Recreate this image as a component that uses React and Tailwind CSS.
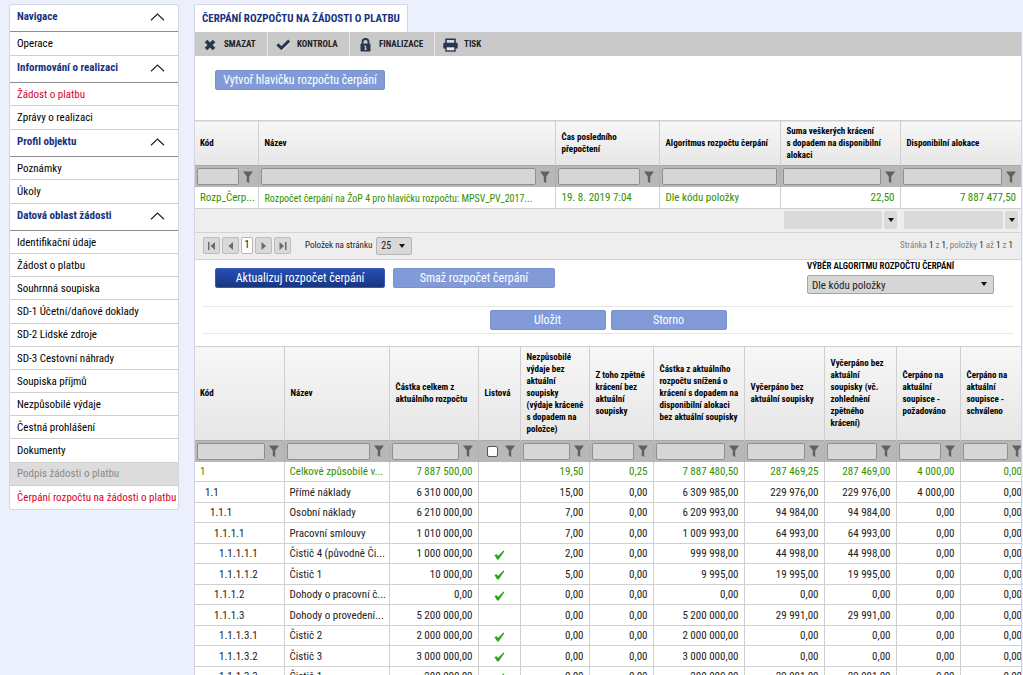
const groups = [
  { title: "Navigace", items: ["Operace"] },
  { title: "Informování o realizaci", items: ["Žádost o platbu", "Zprávy o realizaci"] },
  { title: "Profil objektu", items: ["Poznámky", "Úkoly"] },
  {
    title: "Datová oblast žádosti",
    tall: true,
    items: [
      "Identifikační údaje",
      "Žádost o platbu",
      "Souhrnná soupiska",
      "SD-1 Účetní/daňové doklady",
      "SD-2 Lidské zdroje",
      "SD-3 Cestovní náhrady",
      "Soupiska příjmů",
      "Nezpůsobilé výdaje",
      "Čestná prohlášení",
      "Dokumenty",
      "Podpis žádosti o platbu",
      "Čerpání rozpočtu na žádosti o platbu",
    ],
  },
];

function itemTone(group, item) {
  if (item === "Podpis žádosti o platbu") return "bg-[#dcdcdc] text-[#8a8a8a]";
  if (item.startsWith("Čerpání") || (group === "Informování o realizaci" && item === "Žádost o platbu"))
    return "text-[#d8002a]";
  return "text-black";
}

function Sidebar() {
  return (
    <nav className="w-[170px] shrink-0 overflow-hidden rounded-[3px] border border-[#d3d6e2] bg-white text-[11px]">
      {groups.map((g, gi) => (
        <section key={g.title}>
          <h2 className={gi === 0 ? "border-b border-[#8f8f8f]" : "border-y border-t-[#d0d0d0] border-b-[#8f8f8f]"}>
            <button type="button" className="flex h-[26px] w-full items-center justify-between pr-[13px] pb-[2px] pl-[7px] font-bold text-[#17327e]">
              <span className="whitespace-nowrap">{g.title}</span>
              <svg width="15" height="8" viewBox="0 0 15 8" fill="none" stroke="#222" strokeWidth="1.2" aria-hidden="true">
                <path d="M1 7.2 7.5 1 14 7.2" />
              </svg>
            </button>
          </h2>
          <ul
            className={
              "divide-y divide-[#d0d0d0] " + (g.tall ? "grid h-[278px] auto-rows-fr" : "")
            }
          >
            {g.items.map((it) => (
              <li key={it} className={g.tall ? "" : "h-[23px]"}>
                <a href="#" className={"flex h-full items-center pt-[2px] pl-[7px] whitespace-nowrap " + itemTone(g.title, it)}>
                  {it}
                </a>
              </li>
            ))}
          </ul>
        </section>
      ))}
    </nav>
  );
}

const CrossIcon = () => (
  <svg width="12" height="12" viewBox="0 0 12 12" aria-hidden="true">
    <path d="M2 2l8 8M10 2l-8 8" fill="none" stroke="#28374f" strokeWidth="3.6" />
  </svg>
);

const TickIcon = () => (
  <svg width="15" height="12" viewBox="0 0 15 12" aria-hidden="true">
    <path d="M2.400 6.400 6 10.400 13.800 2.600" fill="none" stroke="#e8ebf0" strokeWidth="2.600" />
    <path d="M1.400 5.400 5.400 9.200 13.200 1.600" fill="none" stroke="#28374f" strokeWidth="3" />
  </svg>
);

const LockIcon = () => (
  <svg width="11" height="14" viewBox="0 0 11 14" aria-hidden="true">
    <path d="M2.5 6V4a3 3 0 0 1 6 0v2" fill="none" stroke="#28374f" strokeWidth="1.8" />
    <rect x="0.5" y="5.5" width="10" height="8" rx="1" fill="#28374f" />
    <path d="M4.2 7.800h1.900v3h.9v1H4.200v-1h.8V8.800h-.8z" fill="#c9c9c9" />
  </svg>
);

const PrintIcon = () => (
  <svg width="15" height="14" viewBox="0 0 15 14" aria-hidden="true">
    <path d="M3 5V1.200h9V5" fill="#d5dae2" stroke="#28374f" strokeWidth="1.6" />
    <path d="M1.500 4.800h12A1.200 1.200 0 0 1 14.700 6V10.500H.3V6A1.200 1.200 0 0 1 1.500 4.800z" fill="#28374f" />
    <rect x="3" y="8.600" width="9" height="4.400" fill="#e6e9ee" stroke="#28374f" strokeWidth="1.4" />
  </svg>
);

const tools = [
  { label: "SMAZAT", icon: <CrossIcon />, w: "w-[73px]" },
  { label: "KONTROLA", icon: <TickIcon />, w: "w-[82px]" },
  { label: "FINALIZACE", icon: <LockIcon />, w: "w-[85px]" },
  { label: "TISK", icon: <PrintIcon />, w: "w-[60px]" },
];

function Toolbar() {
  return (
    <div className="flex h-6 bg-[#c9c9c9]">
      {tools.map((t, i) => (
        <button
          key={t.label}
          type="button"
          className={
            "flex h-full items-center gap-[6px] pt-px pl-[7px] text-[9px] font-bold text-[#222] " +
            t.w +
            (i < 3 ? " border-r border-[#e6e6e6]" : "")
          }
        >
          <span className="flex w-4 justify-center">{t.icon}</span>
          {t.label}
        </button>
      ))}
    </div>
  );
}

const Funnel = () => (
  <svg width="10" height="12" viewBox="0 0 10 12" aria-hidden="true">
    <path d="M0 .5h10L6.200 5.500V12L3.800 10.800V5.500z" fill="#606060" />
  </svg>
);

function FilterCell({ label, funnel = true, check = false }) {
  return (
    <td className="border-r border-[#b0b0b0] p-0 last:border-r-0">
      <div className={"flex h-[21px] items-center pl-[2px] " + (funnel ? "gap-[4px] pr-[5px]" : "pr-[3px]")}>
        {check ? (
          <span className="flex flex-1 justify-center pl-1">
            <input
              type="checkbox"
              aria-label={label}
              className="size-[11px] appearance-none rounded-[2px] border border-[#555] bg-white"
            />
          </span>
        ) : (
          <input
            type="text"
            aria-label={label}
            className="h-[17px] w-0 min-w-0 flex-1 rounded-[2px] border border-[#8e8e8e] bg-[#d6d6d6]"
          />
        )}
        {funnel && (
          <button type="button" aria-label={"Filtr " + label} className="shrink-0">
            <Funnel />
          </button>
        )}
      </div>
    </td>
  );
}

const headCell =
  "border-r border-[#cfcfcf] pr-[3px] pl-[6px] text-left align-middle text-[9px] leading-[12px] font-bold text-black first:pl-[5px] last:border-r-0";
const headRow = "bg-linear-to-b from-[#f7f7f7] to-[#e6e6e6]";
const filterRow = "border-t border-[#a9a9a9] bg-[#b8b8b8]";

const Caret = () => (
  <svg width="6" height="4" viewBox="0 0 6 4" aria-hidden="true">
    <path d="M0 0h6L3 4z" fill="#111" />
  </svg>
);

function HeaderGrid() {
  const cols = [
    { t: "Kód", w: "w-[63px]" },
    { t: "Název", w: "" },
    { t: "Čas posledního přepočtení", w: "w-[104px]" },
    { t: "Algoritmus rozpočtu čerpání", w: "w-[121px]", nofilter: true },
    { t: "Suma veškerých krácení s\u00a0dopadem na disponibilní alokaci", w: "w-[120px]" },
    { t: "Disponibilní alokace", w: "w-[121px]" },
  ];
  const cell = "overflow-hidden whitespace-nowrap border-r border-[#cfcfcf] pt-[2px] pl-[6px] first:pl-[5px] last:border-r-0";
  return (
    <table className="w-full table-fixed border-collapse">
      <colgroup>
        {cols.map((c) => (
          <col key={c.t} className={c.w} />
        ))}
      </colgroup>
      <thead>
        <tr className={"h-[45px] border-t border-[#cfcfcf] " + headRow}>
          {cols.map((c) => (
            <th key={c.t} scope="col" className={headCell}>
              {c.t}
            </th>
          ))}
        </tr>
        <tr className={filterRow}>
          {cols.map((c) => (
            <FilterCell key={c.t} label={c.t} funnel={!c.nofilter} />
          ))}
        </tr>
      </thead>
      <tbody>
        <tr className="h-[21px] border-b border-[#cfcfcf] bg-white text-[11px] text-[#2f8f00]">
          <td className={cell}>Rozp_Čerp...</td>
          <td className={cell + " text-[10px]"}>Rozpočet čerpání na ŽoP 4 pro hlavičku rozpočtu: MPSV_PV_2017...</td>
          <td className={cell}>19. 8. 2019 7:04</td>
          <td className={cell}>Dle kódu položky</td>
          <td className={cell + " pr-[5px] text-right"}>22,50</td>
          <td className={cell + " pr-[5px] text-right"}>7 887 477,50</td>
        </tr>
      </tbody>
      <tfoot>
        <tr className="h-6 border-b border-[#d4d4d4] bg-[#eeeeee]">
          <td colSpan={4} />
          {["Suma krácení", "Suma alokace"].map((l) => (
            <td key={l} className="p-0">
              <div className="flex gap-[2px] pr-[3px] pl-[4px]">
                <span className="h-[18px] flex-1 rounded-[2px] bg-[#dadada]" />
                <button type="button" aria-label={l} className="flex h-[18px] w-[13px] items-center justify-center rounded-[2px] bg-[#dadada]">
                  <Caret />
                </button>
              </div>
            </td>
          ))}
        </tr>
      </tfoot>
    </table>
  );
}

const pageArrows = {
  first: "M0 0h1.500v8H0zM7 0v8L2.500 4z",
  prev: "M6 0v8L1.500 4z",
  next: "M1.500 0v8L6 4z",
  last: "M0.500 0v8L5 4zM6 0h1.500v8H6z",
};

function PageButton({ kind, label }) {
  return (
    <button
      type="button"
      aria-label={label}
      className="flex h-[17px] w-[17px] items-center justify-center rounded-[2px] border border-[#bcbcbc] bg-[#d9d9d9]"
    >
      <svg width="8" height="8" viewBox="0 0 8 8" aria-hidden="true">
        <path d={pageArrows[kind]} fill="#6a6a6a" />
      </svg>
    </button>
  );
}

function Pager() {
  return (
    <div className="flex h-[27px] items-center justify-between border-b border-[#d4d4d4] bg-[#eeeeee] px-[8px] text-[9px] text-[#222]">
      <div className="flex items-center gap-[2px]">
        <PageButton kind="first" label="První stránka" />
        <PageButton kind="prev" label="Předchozí stránka" />
        <span className="flex h-[17px] w-3 items-center justify-center rounded-[2px] border border-[#b5b5b5] bg-white text-[11px]">1</span>
        <PageButton kind="next" label="Další stránka" />
        <PageButton kind="last" label="Poslední stránka" />
        <label htmlFor="page-size" className="ml-[12px] whitespace-nowrap">
          Položek na stránku
        </label>
        <div className="relative ml-[2px]">
          <select
            id="page-size"
            defaultValue="25"
            className="block h-[18px] w-[36px] appearance-none rounded-[2px] border border-[#b5b5b5] bg-[#d9d9d9] pl-[4px] text-[10px]"
          >
            <option>25</option>
            <option>50</option>
          </select>
          <span className="pointer-events-none absolute inset-y-0 right-[7px] flex items-center">
            <Caret />
          </span>
        </div>
      </div>
      <p className="text-[#808080]">
        Stránka <span className="text-[#222]">1</span> z <span className="text-[#222]">1</span>, položky{" "}
        <span className="text-[#222]">1</span> až <span className="text-[#222]">1</span> z{" "}
        <span className="text-[#222]">1</span>
      </p>
    </div>
  );
}

function Btn({ children, className, dark = false }) {
  return (
    <button
      type="button"
      className={
        "h-5 rounded-[2px] border pt-px text-[12px] leading-[17px] whitespace-nowrap text-white " +
        (dark ? "border-[#3a5bb0] bg-linear-to-b from-[#2650b8] to-[#17367f] " : "border-[#7890cc] bg-[#829bd8] ") +
        className
      }
    >
      {children}
    </button>
  );
}

function Actions() {
  return (
    <div className="h-[86px] px-[7px]">
      <div className="flex h-[46px] items-start justify-between pr-[20px] pl-[13px]">
        <div className="flex gap-2 pt-[8px]">
          <Btn dark className="w-[170px]">Aktualizuj rozpočet čerpání</Btn>
          <Btn className="w-[162px]">Smaž rozpočet čerpání</Btn>
        </div>
        <div className="w-[187px]">
          <label htmlFor="algo" className="block pb-[3px] text-[9px] leading-[12px] font-semibold whitespace-nowrap text-black">
            VÝBĚR ALGORITMU ROZPOČTU ČERPÁNÍ
          </label>
          <div className="relative">
            <select
              id="algo"
              defaultValue="Dle kódu položky"
              className="block h-[19px] w-full appearance-none rounded-[2px] border border-[#a5a5a5] bg-[#d6d6d6] pt-[2px] pl-[4px] text-[11px] text-[#222]"
            >
              <option>Dle kódu položky</option>
            </select>
            <span className="pointer-events-none absolute inset-y-0 right-[7px] flex items-center">
              <Caret />
            </span>
          </div>
        </div>
      </div>
      <div className="flex h-7 items-center justify-center gap-[5px] border-y border-[#e8e8e8]">
        <Btn className="w-[116px]">Uložit</Btn>
        <Btn className="w-[116px]">Storno</Btn>
      </div>
    </div>
  );
}

const budgetCols = [
  { t: "Kód", w: "w-[89px]" },
  { t: "Název", w: "" },
  { t: "Částka celkem z aktuálního rozpočtu", w: "w-[89px]" },
  { t: "Listová", w: "w-[42px]", check: true },
  { t: "Nezpůsobilé výdaje bez aktuální soupisky (výdaje krácené s\u00a0dopadem na položce)", w: "w-[69px]" },
  { t: "Z toho zpětné krácení bez aktuální soupisky", w: "w-[64px]" },
  { t: "Částka z aktuálního rozpočtu snížená o krácení s dopadem na disponibilní alokaci bez aktuální soupisky", w: "w-[91px]" },
  { t: "Vyčerpáno bez aktuální soupisky", w: "w-[80px]" },
  { t: "Vyčerpáno bez aktuální soupisky (vč. zohlednění zpětného krácení)", w: "w-[72px]" },
  { t: "Čerpáno na aktuální soupisce - požadováno", w: "w-[64px]" },
  { t: "Čerpáno na aktuální soupisce - schváleno", w: "w-[67px]" },
];

const rows = [
  ["1", "Celkové způsobilé v...", "7 887 500,00", false, "19,50", "0,25", "7 887 480,50", "287 469,25", "287 469,00", "4 000,00", "0,00"],
  ["1.1", "Přímé náklady", "6 310 000,00", false, "15,00", "0,00", "6 309 985,00", "229 976,00", "229 976,00", "4 000,00", "0,00"],
  ["1.1.1", "Osobní náklady", "6 210 000,00", false, "7,00", "0,00", "6 209 993,00", "94 984,00", "94 984,00", "0,00", "0,00"],
  ["1.1.1.1", "Pracovní smlouvy", "1 010 000,00", false, "7,00", "0,00", "1 009 993,00", "64 993,00", "64 993,00", "0,00", "0,00"],
  ["1.1.1.1.1", "Čistič 4 (původně Či...", "1 000 000,00", true, "2,00", "0,00", "999 998,00", "44 998,00", "44 998,00", "0,00", "0,00"],
  ["1.1.1.1.2", "Čistič 1", "10 000,00", true, "5,00", "0,00", "9 995,00", "19 995,00", "19 995,00", "0,00", "0,00"],
  ["1.1.1.2", "Dohody o pracovní č...", "0,00", true, "0,00", "0,00", "0,00", "0,00", "0,00", "0,00", "0,00"],
  ["1.1.1.3", "Dohody o provedení...", "5 200 000,00", false, "0,00", "0,00", "5 200 000,00", "29 991,00", "29 991,00", "0,00", "0,00"],
  ["1.1.1.3.1", "Čistič 2", "2 000 000,00", true, "0,00", "0,00", "2 000 000,00", "0,00", "0,00", "0,00", "0,00"],
  ["1.1.1.3.2", "Čistič 3", "3 000 000,00", true, "0,00", "0,00", "3 000 000,00", "0,00", "0,00", "0,00", "0,00"],
  ["1.1.1.3.3", "Čistič 1", "200 000,00", true, "0,00", "0,00", "200 000,00", "29 991,00", "29 991,00", "0,00", "0,00"],
];

const indents = ["pl-[5px]", "pl-[10px]", "pl-[15px]", "pl-[19px]", "pl-[24px]"];

function BudgetGrid() {
  return (
    <table className="w-full min-w-[832px] table-fixed border-collapse">
      <colgroup>
        {budgetCols.map((c) => (
          <col key={c.t} className={c.w} />
        ))}
      </colgroup>
      <thead>
        <tr className={"h-[94px] border-t border-[#cfcfcf] " + headRow}>
          {budgetCols.map((c) => (
            <th key={c.t} scope="col" className={headCell}>
              {c.t}
            </th>
          ))}
        </tr>
        <tr className={filterRow}>
          {budgetCols.map((c) => (
            <FilterCell key={c.t} label={c.t} check={c.check} />
          ))}
        </tr>
      </thead>
      <tbody className="text-[11px]">
        {rows.map((r, ri) => (
          <tr
            key={r[0]}
            className={
              "border-b border-[#cfcfcf] bg-white odd:h-[20px] even:h-[21px] " +
              (ri === 0 ? "text-[#2f8f00]" : "text-[#222]")
            }
          >
            {r.map((v, ci) => {
              const base = "overflow-hidden whitespace-nowrap border-r border-[#cfcfcf] pt-[2px] last:border-r-0 ";
              if (ci === 0)
                return (
                  <td key={ci} className={base + indents[v.split(".").length - 1]}>
                    {v}
                  </td>
                );
              if (ci === 1)
                return (
                  <td key={ci} className={base + "pl-[5px]"}>
                    {v}
                  </td>
                );
              if (ci === 3)
                return (
                  <td key={ci} className={base}>
                    {v && (
                      <svg className="mx-auto" width="11" height="10" viewBox="0 0 11 10" role="img" aria-label="ano">
                        <path d="M.4 5 2.800 4.200 4 6 9.400.4 10.400 1.200 4.600 9.600H3.200z" fill="#2aa51c" />
                      </svg>
                    )}
                  </td>
                );
              return (
                <td key={ci} className={base + "pr-[5px] text-right"}>
                  {v}
                </td>
              );
            })}
          </tr>
        ))}
      </tbody>
    </table>
  );
}

export default function App() {
  return (
    <div className="flex h-screen items-start gap-[15px] overflow-hidden bg-[#ecf0fc] pt-1 pr-[1px] pl-[9px] font-['Roboto_Condensed','Liberation_Sans_Narrow',sans-serif]">
      <Sidebar />
      <main className="min-w-0 flex-1">
        <div className="flex">
          <h1 className="flex h-7 items-center rounded-t-[2px] border border-b-0 border-[#d3d6e2] bg-white px-[7px] pt-px text-[11px] font-bold whitespace-nowrap text-[#17327e]">
            ČERPÁNÍ ROZPOČTU NA ŽÁDOSTI O PLATBU
          </h1>
        </div>
        <div className="overflow-hidden border-x border-[#d3d6e2] bg-white">
          <Toolbar />
          <div className="flex h-16 items-start pt-[14px] pl-[20px]">
            <Btn className="w-[170px]">Vytvoř hlavičku rozpočtu čerpání</Btn>
          </div>
          <HeaderGrid />
          <Pager />
          <Actions />
          <BudgetGrid />
        </div>
      </main>
    </div>
  );
}
